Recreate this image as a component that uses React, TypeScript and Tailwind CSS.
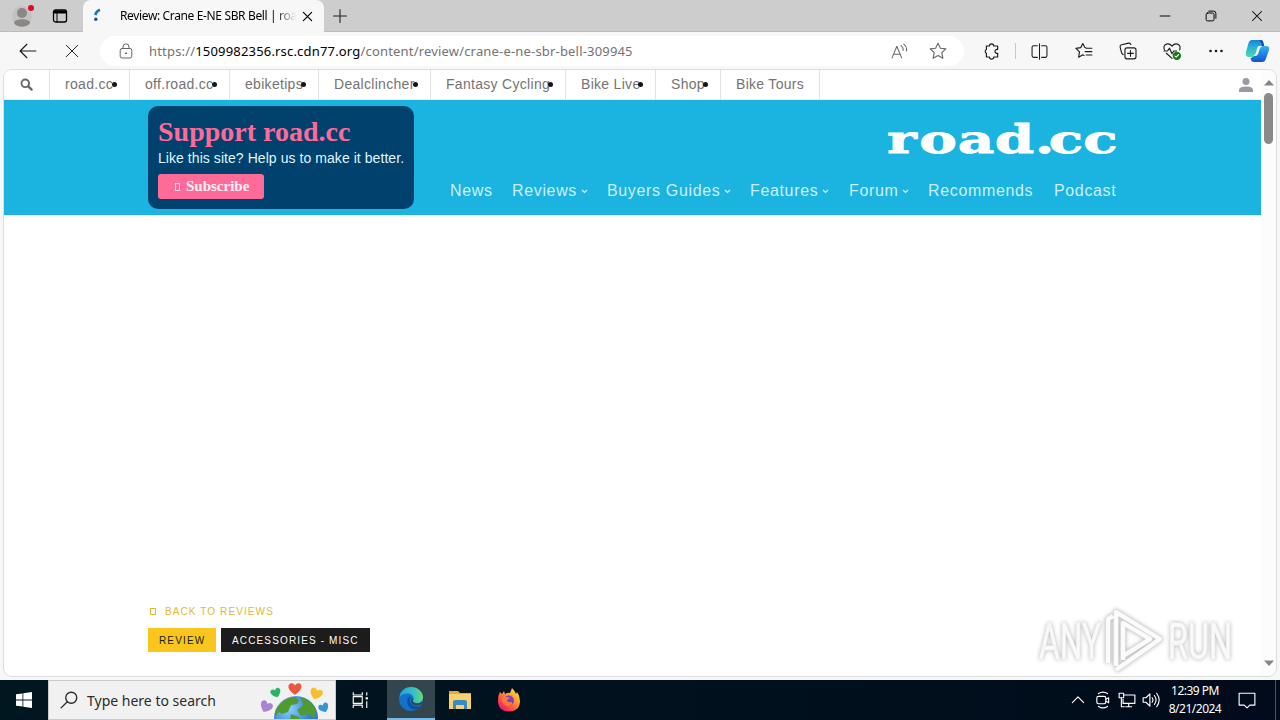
import type { ReactNode } from 'react'

const siteLinks = [
  { label: 'road.cc', width: 'w-[80px]' },
  { label: 'off.road.cc', width: 'w-[100px]' },
  { label: 'ebiketips', width: 'w-[89px]' },
  { label: 'Dealclincher', width: 'w-[112px]' },
  { label: 'Fantasy Cycling', width: 'w-[135px]' },
  { label: 'Bike Live', width: 'w-[90px]' },
  { label: 'Shop', width: 'w-[65px]' },
  { label: 'Bike Tours', width: 'w-[99px]', last: true },
]

const menuLinks = [
  { label: 'News', width: 'w-[62px]' },
  { label: 'Reviews', width: 'w-[95px]', menu: true },
  { label: 'Buyers Guides', width: 'w-[143px]', menu: true },
  { label: 'Features', width: 'w-[99px]', menu: true },
  { label: 'Forum', width: 'w-[79px]', menu: true },
  { label: 'Recommends', width: 'w-[126px]' },
  { label: 'Podcast', width: 'w-[66px]' },
]

function Icon({ children, className = '', size = 16 }: { children: ReactNode; className?: string; size?: number }) {
  return (
    <svg
      width={size}
      height={size}
      viewBox="0 0 16 16"
      fill="none"
      stroke="currentColor"
      strokeWidth="1"
      strokeLinecap="round"
      strokeLinejoin="round"
      className={`shrink-0 ${className}`}
    >
      {children}
    </svg>
  )
}

function TabBar() {
  return (
    <div className="flex h-8 items-center bg-[#cdcdcd] shadow-[inset_0_-1px_0_#bcbcbc]">
      <div className="flex h-8 w-[83px] items-center rounded-br-md">
        <svg width="24" height="26" viewBox="0 0 24 26" className="ml-[11px]">
          <circle cx="11" cy="13" r="10" fill="#c4c2c0" />
          <circle cx="11" cy="10" r="5" fill="#8a8785" />
          <path d="M3 20c0-5 16-5 16 0-3 5-13 5-16 0z" fill="#8a8785" />
          <circle cx="20" cy="5" r="3" fill="#e00b1c" />
        </svg>
        <Icon className="ml-[17px] text-black">
          <rect x="1.5" y="2" width="13" height="12" rx="2" strokeWidth="1.3" />
          <path d="M2 3h12v2H2z" fill="currentColor" />
          <path d="M5 5v9" />
        </Icon>
      </div>
      <div className="flex h-8 w-[241px] items-center rounded-t-lg bg-[#f7f7f7]">
        <svg width="16" height="16" viewBox="0 0 16 16" className="ml-[7px] shrink-0">
          <path d="M10 1.8Q6.5 3 5.2 7" stroke="#1676bd" strokeWidth="2.6" fill="none" />
          <circle cx="5.8" cy="11.2" r="1.7" fill="#17548a" />
        </svg>
        <div className="ml-[14px] w-[176px] whitespace-nowrap bg-linear-to-r from-black from-88% to-transparent bg-clip-text text-xs leading-5 tracking-[-0.36px] text-transparent">
          Review: Crane E-NE SBR Bell | roa
        </div>
        <Icon size={11} className="ml-[6px] text-black">
          <path d="M2 2l12 12M14 2L2 14" strokeWidth="1.7" />
        </Icon>
      </div>
      <Icon size={16} className="ml-[8px] text-[#222]">
        <path d="M1.5 8h13M8 1.5v13" strokeWidth="1.1" />
      </Icon>
      <div className="ml-auto flex items-center text-black">
        <Icon size={12} className="mr-[34px]">
          <path d="M1.5 8h13" strokeWidth="1.3" />
        </Icon>
        <Icon size={12} className="mr-[34px]">
          <rect x="1.5" y="4" width="10.5" height="10.5" rx="2" strokeWidth="1.3" />
          <path d="M5 1.5h6.5q3 0 3 3V11" strokeWidth="1.3" />
        </Icon>
        <Icon size={12} className="mr-[17px]">
          <path d="M2 2l12 12M14 2L2 14" strokeWidth="1.4" />
        </Icon>
      </div>
    </div>
  )
}

function CopilotLogo() {
  return (
    <svg width="25" height="24" viewBox="0 0 25 24" className="shrink-0">
      <defs>
        <linearGradient id="cpLeft" x1="0" y1="0" x2="0" y2="1">
          <stop offset="0" stopColor="#1685d8" />
          <stop offset="0.45" stopColor="#26b4dc" />
          <stop offset="1" stopColor="#55d7a0" />
        </linearGradient>
        <linearGradient id="cpRight" x1="0" y1="0" x2="0" y2="1">
          <stop offset="0" stopColor="#2fb5f5" />
          <stop offset="1" stopColor="#1553d4" />
        </linearGradient>
      </defs>
      <path d="M18 7h3q4 0 3 4l-3 8.500q-1 3.500-4 3.500H9q-3 0-3.500-4 2.500 0 4-4l2.500-5q1-3 6-3z" fill="url(#cpRight)" />
      <path d="M7 1h8q3 0 4 6h-3q-3 0-4 3l-1.500 4.500q-1 3.500-4 3.500H4q-4 0-3-5L3.500 4Q4.500 1 7 1z" fill="url(#cpLeft)" />
      <path d="M14 1h2q2 0 2.500 3l.7 3H17q-1-5-3-6z" fill="#0f4fa8" />
      <path d="M13.500 7H17q-2 1-2.500 3.500l-1.500 4.500q-.7 2-3 2h-2q2-.5 3-3.500l1-3.500q.5-2 1.500-3z" fill="#f4fafc" />
    </svg>
  )
}

function AddressBar() {
  return (
    <div className="flex h-[38px] items-center bg-[#f7f7f7] text-[#1b1b1b]">
      <Icon size={18} className="ml-[19px]">
        <path d="M1 8h14M7 2L1 8l6 6" />
      </Icon>
      <Icon size={14} className="ml-[28px]">
        <path d="M1.500 1.500l13 13M14.500 1.500l-13 13" strokeWidth="1.1" />
      </Icon>
      <div className="ml-[21px] flex h-[30px] w-[864px] items-center rounded-full bg-white">
        <Icon size={16} className="ml-[18px] text-[#666]">
          <rect x="2.200" y="5.500" width="11.600" height="9.500" rx="1.800" />
          <path d="M5 5.500V4q0-3.200 3-3.200T11 4v1.500" />
          <circle cx="8" cy="10.300" r=".6" fill="currentColor" />
        </Icon>
        <div className="ml-[15px] w-[500px] whitespace-nowrap text-[13px] leading-5 tracking-[0.18px] text-[#737373]">
          https://<span className="text-black">1509982356.rsc.cdn77.org</span>/content/review/crane-e-ne-sbr-bell-309945
        </div>
        <Icon size={17} className="ml-auto text-[#666]">
          <path d="M1 14L5.500 3 10 14M2.500 10.500h6M9.500 2.500q2.500 2 1.800 4.500M12 1q3.500 2.500 2.500 6.500" />
        </Icon>
        <Icon size={18} className="ml-[21px] mr-[17px] text-[#666]">
          <path d="M8 1l2.100 4.500 4.900.6-3.600 3.400.9 4.900L8 12l-4.300 2.400.9-4.900L1 6.100l4.900-.6z" />
        </Icon>
      </div>
      {/* puzzle piece: knobs on top, left and bottom, notch on the right */}
      <Icon size={17} className="ml-[19px]">
        <path d="M3.200 2.800h2.900a2 2 0 014 0h3.700v3.300a1.900 1.900 0 100 3.600v3.500h-3.700a2 2 0 01-4 0H3.200V9.700a2 2 0 010-3.600z" strokeWidth="1.100" />
      </Icon>
      <div className="ml-[15px] h-4 w-px bg-[#c8c8c8]" />
      <Icon size={17} className="ml-[15px]">
        <path d="M6 2.500H2.500q-1.500 0-1.500 1.500v8q0 1.500 1.500 1.500H6M10 2.500h3.500Q15 2.500 15 4v8q0 1.500-1.500 1.500H10M8 .8v14.400" />
      </Icon>
      <Icon size={18} className="ml-[27px]">
        <path d="M10 5.300L8.800 5 7 1.300 5.100 5l-4.300.7L4 8.800l-.8 4.800L7 11.400l1 .5M10.200 5.500H15M9 8.500h6M10 11.500h5" />
      </Icon>
      <Icon size={18} className="ml-[26px]">
        <rect x="5.300" y="5.200" width="9.800" height="9.800" rx="1.800" />
        <path d="M10.200 7.500v5.200M7.600 10.100h5.200M3.800 11.300Q2.500 10.500 2.200 9.200L1 4.500Q.7 3 2.200 2.500L8.500 1q1.500-.3 2 1.200" />
      </Icon>
      <Icon size={18} className="ml-[26px]">
        <path d="M1.200 7Q-.2 2.500 4 1.700q2.200-.2 4 2 1.800-2.200 4-2 4.200.8 2.800 5.300M1 8h3l1.800-2.500L8 10.500 9.500 8H12M3 10l5 4.500" />
        <circle cx="12.300" cy="12.300" r="3.200" fill="#107c10" stroke="#107c10" />
        <path d="M10.700 12.500l1 .9 2.200-2.300" stroke="white" />
      </Icon>
      <Icon size={16} className="ml-[27px]">
        <circle cx="2.500" cy="8" r="1.300" fill="currentColor" stroke="none" />
        <circle cx="8" cy="8" r="1.300" fill="currentColor" stroke="none" />
        <circle cx="13.500" cy="8" r="1.300" fill="currentColor" stroke="none" />
      </Icon>
      <div className="ml-auto mr-[10px]">
        <CopilotLogo />
      </div>
    </div>
  )
}

function SiteStrip() {
  return (
    <nav className="flex h-[30px] border-b border-[#d9effb] bg-white font-['Liberation_Sans',Arial,sans-serif] text-sm tracking-[0.3px] text-[#747474]">
      <div className="flex w-[46px] items-center justify-center border-r border-[#e2e2e2]">
        <Icon size={13} className="text-[#666]">
          <circle cx="6.500" cy="6.500" r="4.700" strokeWidth="2.300" />
          <path d="M10.300 10.300l4 4" strokeWidth="2.800" />
        </Icon>
      </div>
      {siteLinks.map(({ label, width, last }) => (
        <div key={label} className={`relative shrink-0 border-r border-[#e2e2e2] pl-[15px] leading-[29px] whitespace-nowrap ${width}`}>
          {label}
          {!last && <span className="absolute right-[12px] top-[12px] size-[5px] rounded-full bg-[#151515]" />}
        </div>
      ))}
      <svg width="16" height="16" viewBox="0 0 16 16" fill="#9999a1" className="ml-auto mr-[7px] mt-[7px]">
        <circle cx="8" cy="4.500" r="3.500" />
        <path d="M1 15v-2q0-3.500 7-3.500t7 3.500v2z" />
      </svg>
    </nav>
  )
}

function SupportBox() {
  return (
    <div className="mt-[6px] h-[103px] w-[266px] rounded-[10px] bg-[#00416d] px-[10px] pt-[9px]">
      <h2 className="whitespace-nowrap font-['Liberation_Serif','Times_New_Roman',serif] text-[28px] font-bold leading-[34px] text-[#ff6b98]">
        Support road.cc
      </h2>
      <p className="whitespace-nowrap font-['Liberation_Sans',Arial,sans-serif] text-sm leading-[18px] tracking-[0.06px] text-[#dff7ff]">
        Like this site? Help us to make it better.
      </p>
      <button className="mt-[7px] flex h-[25px] w-[106px] items-center rounded-[3px] bg-[#ff6b98] pl-[17px] font-['Liberation_Serif','Times_New_Roman',serif] text-[15px] font-bold text-[#fff0f4]">
        <span className="mr-[6px] h-2 w-[5px] border border-[#ffd9e4]" />
        Subscribe
      </button>
    </div>
  )
}

function SiteHeader() {
  return (
    <header className="flex h-[115px] bg-[#1bb3e0] pl-[144px]">
      <SupportBox />
      <div className="ml-[36px] w-[670px]">
        <svg width="233" height="48" viewBox="0 0 233 48" className="ml-[437px] mt-[15px] overflow-visible">
          <text
            transform="scale(1.448 1)"
            x="0 22.300 48.800 74.500 102 111.700 135.500"
            y="38"
            fontFamily="DejaVu Serif"
            fontWeight="bold"
            fontSize="39"
            fill="white"
            stroke="white"
            strokeWidth="0.8"
          >
            road.cc
          </text>
        </svg>
        <nav className="mt-[16px] flex font-['Liberation_Sans',Arial,sans-serif] text-base leading-6 tracking-[0.65px] text-[#c9f1ff]">
          {menuLinks.map(({ label, width, menu }) => (
            <div key={label} className={`flex shrink-0 items-center whitespace-nowrap ${width}`}>
              {label}
              {menu && (
                <svg width="7" height="5" viewBox="0 0 7 5" className="ml-[4px]">
                  <path d="M1 1l2.500 2.500L6 1" fill="none" stroke="currentColor" strokeWidth="1.200" />
                </svg>
              )}
            </div>
          ))}
        </nav>
      </div>
    </header>
  )
}

function ArticleIntro() {
  return (
    <main className="pl-[144px] pt-[388px] font-['Liberation_Sans',Arial,sans-serif] text-[10px]">
      <a className="flex h-4 items-center tracking-[1.1px] text-[#e0b936]">
        <span className="ml-[2px] mr-[9px] h-[7px] w-[6px] border border-[#e0b936]" />
        BACK TO REVIEWS
      </a>
      <div className="mt-[9px] flex gap-[5px] leading-[26px] tracking-[1.14px]">
        <span className="h-6 w-[68px] whitespace-nowrap bg-[#fac51c] pl-[11px] text-[#1c1c1c]">REVIEW</span>
        <span className="h-6 w-[149px] whitespace-nowrap bg-[#1c1c1c] pl-[11px] text-white">ACCESSORIES - MISC</span>
      </div>
    </main>
  )
}

function Scrollbar() {
  return (
    <div className="flex w-[15px] flex-col items-center bg-[#fcfcfc]">
      <svg width="10" height="6" viewBox="0 0 10 6" className="mt-[10px]">
        <path d="M5 0l5 5.500H0z" fill="#858585" />
      </svg>
      <div className="mt-[7px] h-[51px] w-[9px] rounded-full bg-[#8a8a8a]" />
      <svg width="10" height="6" viewBox="0 0 10 6" className="mb-[10px] mt-auto">
        <path d="M5 6L0 .5h10z" fill="#858585" />
      </svg>
    </div>
  )
}

function Watermark() {
  return (
    <svg
      width="210"
      height="70"
      viewBox="0 0 210 70"
      className="absolute left-[1036px] top-[606px] overflow-visible drop-shadow-[0_0_2px_#b4b4b4]"
      fill="#fafafa"
      fontFamily="Roboto"
      fontSize="50"
      stroke="#f4f4f4"
      strokeWidth="1.2"
    >
      <text x="3" y="53" textLength="62" lengthAdjust="spacingAndGlyphs">ANY</text>
      <text x="132" y="53" textLength="64" lengthAdjust="spacingAndGlyphs">RUN</text>
      <g fill="none" strokeLinejoin="round">
        <path d="M80 60V6l44 27-44 31M72 57V13l5-3M87 54V17l27 16-27 17" stroke="#dcdcdc" strokeWidth="5.500" />
        <path d="M80 60V6l44 27-44 31M72 57V13l5-3M87 54V17l27 16-27 17" stroke="#fbfbfb" strokeWidth="4.200" />
      </g>
    </svg>
  )
}

function EarthDoodle() {
  const heart = 'M0 5C-8 0-6-5-3-5Q-1-5 0-3 1-5 3-5C6-5 8 0 0 5z'
  return (
    <svg width="70" height="38" viewBox="0 0 70 38" className="ml-auto mr-[5px]">
      <defs>
        <radialGradient id="ocean" cx="0.35" cy="0.3">
          <stop offset="0" stopColor="#86cfff" />
          <stop offset="1" stopColor="#347bd1" />
        </radialGradient>
      </defs>
      <circle cx="36" cy="37" r="22" fill="url(#ocean)" />
      <path d="M17 27q7-11 18-11 6 3 2 7l-6 1-3 7-6 2-3-2-4 5q0-6 2-9zM41 16q11 3 15 13l-2 8-6-4-7 2-4-6 6-5zM31 33l8 3 2 3H30z" fill="#4f9b32" />
      <path d={heart} transform="translate(35 8) scale(1.150)" fill="#ed563f" />
      <path d={heart} transform="translate(16 12) rotate(-20) scale(.9)" fill="#29b36a" />
      <path d={heart} transform="translate(56 13) rotate(20) scale(1.100)" fill="#f8bd2c" />
      <path d={heart} transform="translate(6 26) rotate(25) scale(1.100)" fill="#a784d1" />
      <path d={heart} transform="translate(64 27) rotate(-25) scale(.9)" fill="#3195d6" />
    </svg>
  )
}

function EdgeLogo() {
  return (
    <svg width="26" height="26" viewBox="0 0 26 26">
      <defs>
        <linearGradient id="edgeTop" x1="0" x2="1">
          <stop offset="0" stopColor="#249fe1" />
          <stop offset="0.6" stopColor="#35c1c7" />
          <stop offset="1" stopColor="#66dc62" />
        </linearGradient>
      </defs>
      <circle cx="13" cy="13" r="12" fill="#1271ca" />
      <path d="M1.500 11C2.500 4 8 1 13 1c7 0 12 5 12 10 0 4-3 6-6 6-2.500 0-4.500-1-4.500-2 1-1 1-2 1-3 0-4-8-7-14-1z" fill="url(#edgeTop)" />
      <path d="M10 12q-3 7 4 11 5 2 9-3-8 2-11-4-1-3 1-5-1-1-3 1z" fill="#124f99" />
      <path d="M15.500 12q0 2-1 3 2 3 6 2.500l3.500-1.500v2q-4 2-7 1-4-1-4-4 0-2 2.500-3z" fill="#33454d" />
    </svg>
  )
}

function FolderLogo() {
  return (
    <svg width="24" height="22" viewBox="0 0 24 22">
      <path d="M1 2h9l2 2h11v16H1z" fill="#e9a93a" />
      <path d="M1 5h22v15H1z" fill="#f7d16c" />
      <path d="M5 20v-7q0-2 2-2h10q2 0 2 2v7h-3v-4H8v4z" fill="#398bc8" />
    </svg>
  )
}

function FirefoxLogo() {
  return (
    <svg width="24" height="24" viewBox="0 0 24 24">
      <defs>
        <linearGradient id="fox" x1="1" y1="0" x2="0.2" y2="1">
          <stop offset="0" stopColor="#fff34a" />
          <stop offset="0.45" stopColor="#ff982c" />
          <stop offset="0.8" stopColor="#ff3b52" />
          <stop offset="1" stopColor="#d31785" />
        </linearGradient>
      </defs>
      <path d="M3 4l2 2 2-3 1 3q3-2 5-1l2-5q3 3 4 6l1-2q3 4 3 9 0 10-11 10.500Q1 23 1 13q0-6 2-9z" fill="url(#fox)" />
      <circle cx="12" cy="12.500" r="5" fill="#7b40cf" />
      <path d="M5 10q4-2 8 0l-3 2q0 3 5 2 1 3-4 4-6-1-6-8z" fill="#ff7b31" />
    </svg>
  )
}

function Taskbar() {
  return (
    <footer className="flex h-10 bg-linear-to-r from-[#00171f] to-[#010b1b] text-white">
      <div className="flex w-12 items-center justify-center">
        <svg width="16" height="16" viewBox="0 0 16 16" fill="white">
          <path d="M0 2.300L6.500 1.400v6.200H0zM7.300 1.300L16 0v7.600H7.300zM0 8.400h6.500v6.200L0 13.700zM7.300 8.400H16V16l-8.700-1.300z" />
        </svg>
      </div>
      <div className="flex w-[288px] items-center border border-[#c9c9c9] bg-[#f1f1f1] text-[#2b2b2b]">
        <Icon size={18} className="ml-[11px]">
          <circle cx="10" cy="6" r="4.900" strokeWidth="1.200" />
          <path d="M6.500 9.500L1 15" strokeWidth="1.200" />
        </Icon>
        <span className="ml-[9px] whitespace-nowrap pt-[2px] text-sm">Type here to search</span>
        <EarthDoodle />
      </div>
      <div className="flex w-[51px] items-center pl-[15px]">
        <Icon size={18}>
          <path d="M2 1v2.500h8V1M2 15v-2.500h8V15M2 5h8v6H2zM14 1v3M14 9v6" strokeLinecap="butt" />
          <path d="M13 5.500h2v2h-2z" fill="currentColor" stroke="none" />
        </Icon>
      </div>
      <div className="flex w-12 items-center justify-center border-b-2 border-[#76b9ed] bg-[#33454d]">
        <EdgeLogo />
      </div>
      <div className="flex w-[49px] items-center justify-center">
        <FolderLogo />
      </div>
      <div className="flex w-[49px] items-center justify-center">
        <FirefoxLogo />
      </div>
      <div className="ml-auto flex items-center">
        <Icon size={14}>
          <path d="M1.500 11L8 4.500l6.500 6.500" strokeWidth="1.300" />
        </Icon>
        <Icon size={18} className="ml-[9px]">
          <rect x="2.500" y="4.800" width="8" height="6.500" rx="1.500" />
          <path d="M10.500 7.300L13 6v4.500l-2.500-1.300M4 2.300q4-2.500 8 0M4 13.700q4 2.500 8 0" />
        </Icon>
        <Icon size={18} className="ml-[6px]">
          <path d="M5 3.500h10v7.500H4.500V7M1 2h4v4H1zM3 6v8h3M9.500 11v3M6.500 14h6" strokeLinecap="butt" />
        </Icon>
        <Icon size={18} className="ml-[6px]">
          <path d="M1 6h2.500L7 2.500v11L3.500 10H1zM9 6q1.500 2 0 4M11 4q3 4 0 8M13 2q4.500 6 0 12" />
        </Icon>
        <div className="ml-[4px] w-[62px] text-center text-xs leading-[18px] tracking-[-0.5px] whitespace-nowrap">
          <div>12:39 PM</div>
          <div>8/21/2024</div>
        </div>
        <Icon size={18} className="ml-[12px]">
          <path d="M1 2h14v10.500h-4.500L8 15l-2.500-2.500H1z" />
        </Icon>
        <div className="ml-[19px] mr-[4px] h-10 w-px bg-[#4b535c]" />
      </div>
    </footer>
  )
}

export default function App() {
  return (
    <div className="relative flex h-[720px] w-[1280px] flex-col overflow-hidden bg-[#f7f7f7] font-['Noto_Sans','Open_Sans',sans-serif]">
      <TabBar />
      <AddressBar />
      <div className="mx-[4px] mb-[4px] flex h-[606px] shrink-0 overflow-hidden rounded-lg bg-white shadow-[0_0_0_1px_#dcdcdc]">
        <div className="w-[1257px]">
          <SiteStrip />
          <SiteHeader />
          <ArticleIntro />
        </div>
        <Scrollbar />
      </div>
      <Taskbar />
      <Watermark />
    </div>
  )
}
